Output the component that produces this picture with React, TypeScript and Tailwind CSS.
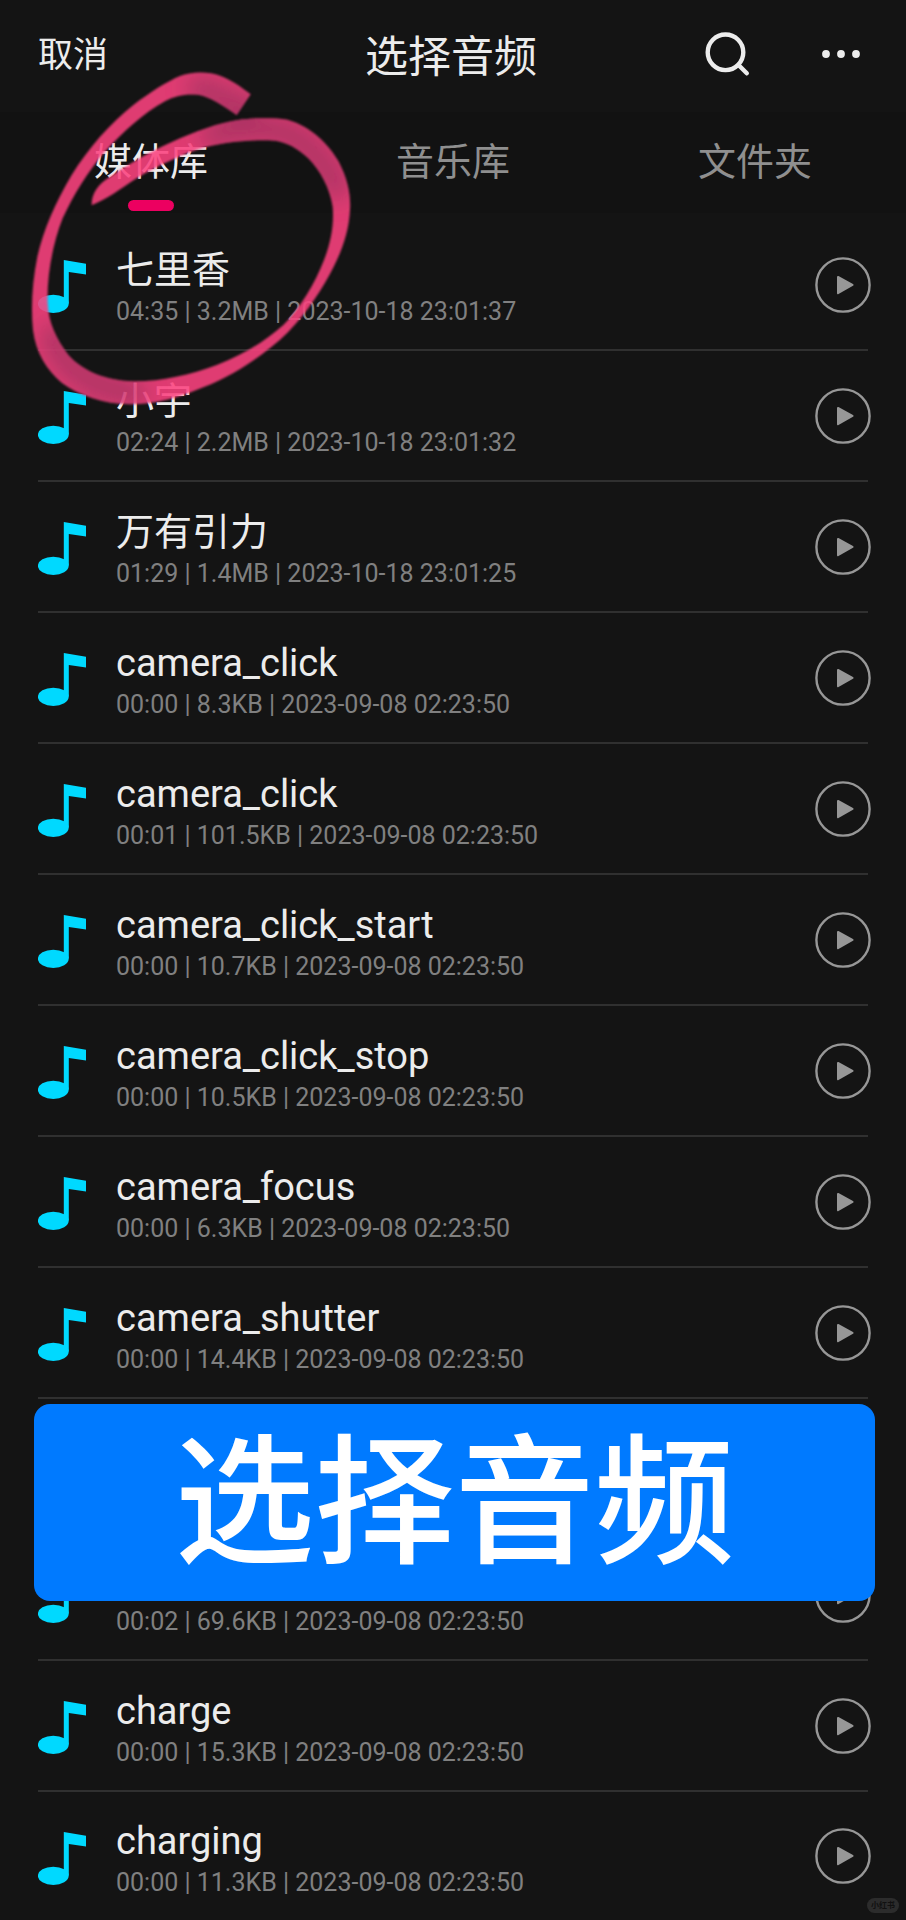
type Track = { name: string; meta: string };

const tracks: Track[] = [
  { name: '七里香', meta: '04:35 | 3.2MB | 2023-10-18 23:01:37' },
  { name: '小宇', meta: '02:24 | 2.2MB | 2023-10-18 23:01:32' },
  { name: '万有引力', meta: '01:29 | 1.4MB | 2023-10-18 23:01:25' },
  { name: 'camera_click', meta: '00:00 | 8.3KB | 2023-09-08 02:23:50' },
  { name: 'camera_click', meta: '00:01 | 101.5KB | 2023-09-08 02:23:50' },
  { name: 'camera_click_start', meta: '00:00 | 10.7KB | 2023-09-08 02:23:50' },
  { name: 'camera_click_stop', meta: '00:00 | 10.5KB | 2023-09-08 02:23:50' },
  { name: 'camera_focus', meta: '00:00 | 6.3KB | 2023-09-08 02:23:50' },
  { name: 'camera_shutter', meta: '00:00 | 14.4KB | 2023-09-08 02:23:50' },
  { name: '', meta: '' },
  { name: '', meta: '00:02 | 69.6KB | 2023-09-08 02:23:50' },
  { name: 'charge', meta: '00:00 | 15.3KB | 2023-09-08 02:23:50' },
  { name: 'charging', meta: '00:00 | 11.3KB | 2023-09-08 02:23:50' },
];

const tabs = ['媒体库', '音乐库', '文件夹'];

function NoteIcon() {
  return (
    <svg width="48" height="53" viewBox="0 0 48 53" className="mt-1 shrink-0" aria-hidden="true">
      <path d="M25.8 0 L48 3.8 V14.6 L30.8 12 V43.5 H25.8 Z" fill="#00d9ff" />
      <ellipse cx="15.3" cy="43.8" rx="15.4" ry="9.1" fill="#00d9ff" />
    </svg>
  );
}

function PlayIcon() {
  return (
    <svg width="56" height="56" viewBox="0 0 56 56" aria-hidden="true">
      <circle cx="28" cy="28" r="26.6" fill="none" stroke="#979797" strokeWidth="2.4" />
      <path d="M23 20 L37.5 28 L23 36.2 Z" fill="#979797" stroke="#979797" strokeWidth="2" strokeLinejoin="round" />
    </svg>
  );
}

const ribbon =
  'M275 436 C274 402 292 374 330 350 C400 303 470 265 540 235 C610 205 680 180 750 176 C790 174 830 174 862 179 ' +
  'C935 200 985 252 1015 303 C1045 360 1053 410 1050 450 C1046 530 1015 600 975 668 C935 735 885 805 815 860 ' +
  'C760 905 690 950 610 982 C540 1012 470 1033 390 1033 C310 1031 240 1008 185 968 C140 930 108 880 99 810 ' +
  'C92 740 97 665 112 590 C130 510 165 430 215 345 C265 265 330 190 400 135 C450 97 500 65 540 48 ' +
  'C575 34 625 34 660 47 C695 60 725 82 752 103 L710 165 C680 143 640 118 610 108 C575 99 530 104 495 124 ' +
  'C430 160 370 215 315 275 C265 332 220 405 188 475 C158 550 140 650 143 730 C146 790 168 835 205 885 ' +
  'C250 935 320 962 400 964 C480 965 570 945 650 915 C730 885 800 840 850 795 C900 745 945 670 972 600 ' +
  'C995 540 1002 490 998 440 C990 385 960 330 925 295 C890 262 860 247 825 242 C755 238 680 246 615 262 ' +
  'C545 282 470 320 410 355 C360 388 320 418 275 436 Z';

function Scribble() {
  return (
    <svg
      width="380"
      height="370"
      viewBox="0 0 1140 1110"
      className="pointer-events-none absolute top-[60px] left-0"
      aria-hidden="true"
    >
      <defs>
        <clipPath id="ribbon">
          <path d={ribbon} />
        </clipPath>
        <filter id="shade" x="-50%" y="-50%" width="200%" height="200%">
          <feGaussianBlur stdDeviation="32" />
        </filter>
        <filter id="soft">
          <feGaussianBlur stdDeviation="3" />
        </filter>
      </defs>
      <g opacity="0.88" filter="url(#soft)">
        <path d={ribbon} fill="#fc427f" />
        <g clipPath="url(#ribbon)">
          <g fill="none" stroke="#c63870" strokeWidth="80" strokeLinecap="round" filter="url(#shade)">
            <path d="M600 85 L740 145" />
            <path d="M640 225 C760 195 850 200 900 240 C960 290 990 330 1010 380" />
            <path d="M160 830 C190 920 260 980 400 1000" />
          </g>
        </g>
      </g>
    </svg>
  );
}

export default function App() {
  return (
    <div className="relative min-h-screen overflow-hidden bg-[#141414] font-['Roboto','Noto_Sans_CJK_SC',sans-serif] text-[#ececec]">
      <header className="grid h-28 grid-cols-3 items-center pr-11 pl-[38px]">
        <button type="button" className="justify-self-start text-[35px] leading-[40px]">
          取消
        </button>
        <h1 className="pt-[2px] pl-[2px] text-center text-[43px] leading-[48px] whitespace-nowrap">选择音频</h1>
        <div className="flex items-center gap-[70px] justify-self-end">
          <button type="button" aria-label="搜索">
            <svg width="48" height="48" viewBox="0 0 48 48" fill="none" stroke="#ececec" strokeWidth="4.4" strokeLinecap="round" aria-hidden="true">
              <circle cx="23.5" cy="20.3" r="17.8" />
              <path d="M36.5 33 L44.8 41.3" />
            </svg>
          </button>
          <button type="button" aria-label="更多">
            <svg width="42" height="48" viewBox="0 0 42 48" fill="#ececec" aria-hidden="true">
              <circle cx="6" cy="22" r="3.9" />
              <circle cx="21" cy="22" r="3.9" />
              <circle cx="36" cy="22" r="3.9" />
            </svg>
          </button>
        </div>
      </header>

      <nav className="grid h-[101px] grid-cols-3 bg-[#121212]">
        {tabs.map((tab, i) => (
          <button
            key={tab}
            type="button"
            aria-pressed={i === 0}
            className={
              i === 0
                ? 'flex flex-col items-center gap-[14px] pt-[26px] text-[38px] leading-[48px]'
                : 'flex flex-col items-center gap-[14px] pt-[26px] text-[38px] leading-[48px] text-[#8f8f8f]'
            }
          >
            {tab}
            {i === 0 && <span className="h-[11px] w-[46px] rounded-full bg-[#ec0060]" />}
          </button>
        ))}
      </nav>

      <ul className="mt-[7px] px-[38px]">
        {tracks.map((track, i) => (
          <li
            key={i}
            className="flex h-[131px] items-center border-b-2 border-[#303030] last:h-[128px] last:border-b-0"
          >
            <NoteIcon />
            <div className="ml-[30px] min-w-0 flex-1 pt-[10px]">
              <p className="h-[44px] truncate text-[38px] leading-[44px]">{track.name}</p>
              <p className="h-[40px] truncate text-[25px] leading-[40px] text-[#808080]">{track.meta}</p>
            </div>
            <button type="button" aria-label={`播放 ${track.name}`} className="-mr-[3px] shrink-0">
              <PlayIcon />
            </button>
          </li>
        ))}
      </ul>

      <Scribble />

      <div className="absolute top-[1404px] right-[31px] left-[34px] flex h-[197px] items-center justify-center rounded-2xl bg-[#007aff] pb-6 font-['Noto_Sans_CJK_SC',sans-serif] text-[140px] leading-none font-medium text-white">
        选择音频
      </div>

      <span className="absolute right-[7px] bottom-[7px] rounded-full bg-[#2c2c2c] px-1 text-[8px] leading-[15px] font-bold text-[#111111]">
        小红书
      </span>
    </div>
  );
}
